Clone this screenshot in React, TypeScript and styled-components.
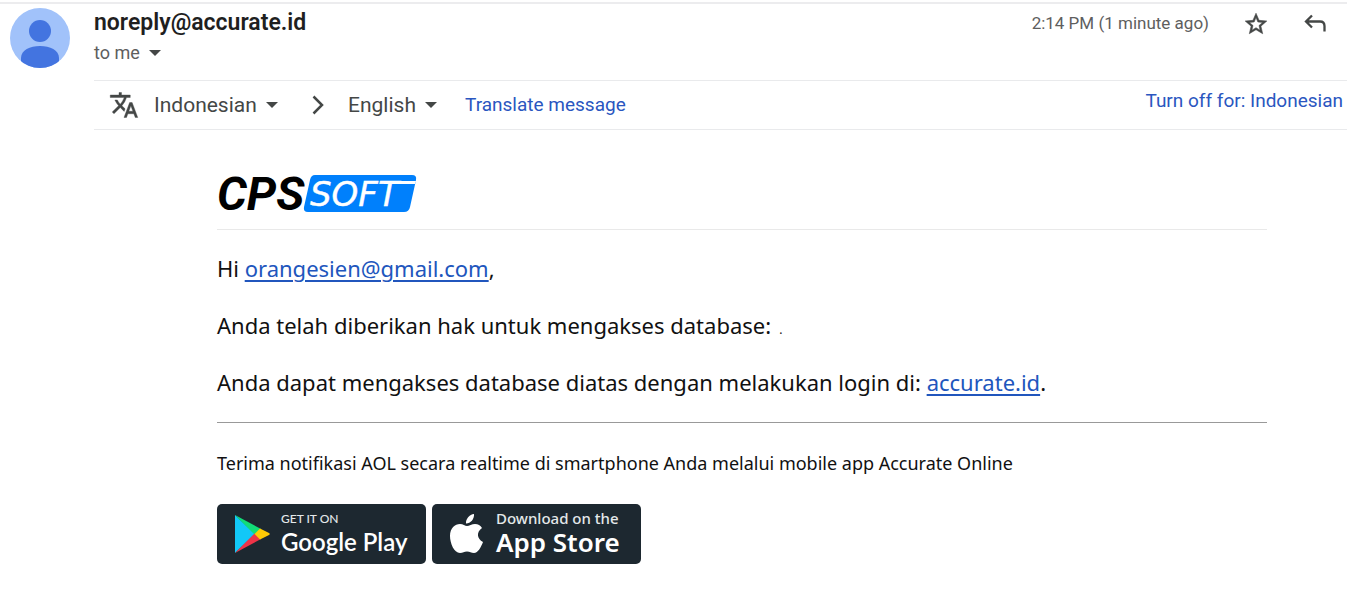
import React from "react";
import styled, { createGlobalStyle } from "styled-components";

const GlobalStyle = createGlobalStyle`
  * { box-sizing: border-box; }
  body {
    margin: 0;
    background: #fff;
    color: #1f1f1f;
    font-family: Roboto, "Liberation Sans", sans-serif;
  }
  button, select { font: inherit; color: inherit; background: none; border: 0; padding: 0; margin: 0; cursor: pointer; }
  svg { display: block; flex: none; }
  p, h2 { margin: 0; }
`;

const Message = styled.main`
  margin-top: 2px;
  border-top: 2px solid #ececee;
  padding: 4px 0 24px 10px;
  display: grid;
  grid-template-columns: 60px minmax(0, 1fr);
  column-gap: 24px;
`;

const Content = styled.div`
  min-width: 0;
`;

const Header = styled.header`
  display: flex;
  justify-content: space-between;
  align-items: flex-start;
  height: 72px;
  padding-right: 20px;
`;

const Sender = styled.h2`
  font-size: 23px;
  line-height: 30px;
  font-weight: 600;
`;

const Recipient = styled.button`
  display: flex;
  align-items: center;
  gap: 9px;
  font-size: 18px;
  line-height: 30px;
  color: #5e5e5e;
`;

const Meta = styled.div`
  display: flex;
  align-items: center;
  height: 32px;
`;

const SentAt = styled.time`
  color: #5e5e5e;
  font-size: 17px;
  padding-bottom: 2px;
`;

const IconButton = styled.button`
  display: flex;
  color: #444746;
  margin-left: 34px;
`;

const TranslateBar = styled.section`
  display: flex;
  align-items: center;
  height: 50px;
  border-top: 1px solid #e9eaec;
  border-bottom: 1px solid #e9eaec;
  padding: 0 4px 0 15px;
  color: #444746;
  font-size: 21px;
`;

const SelectWrap = styled.label`
  display: flex;
  align-items: center;
  gap: 9px;
`;

const Select = styled.select`
  appearance: none;
  line-height: 28px;
`;

const BarLink = styled.a<{ $end?: boolean }>`
  color: #2a56c0;
  font-size: 19px;
  line-height: 28px;
  text-decoration: none;
  margin-left: ${(p) => (p.$end ? "auto" : "28px")};
  padding-bottom: ${(p) => (p.$end ? "8px" : "0")};
`;

const TranslateIcon = styled.span`
  margin-right: 15px;
`;

const Arrow = styled.span`
  margin: 0 24px 0 34px;
`;

const Body = styled.article`
  margin: 40px 80px 0 123px;
  color: #111;
  font-family: "Noto Sans", "Open Sans", sans-serif;
`;

const LogoRow = styled.div`
  height: 60px;
  border-bottom: 1px solid #e9e9e9;
`;

const Paragraph = styled.p`
  font-size: 22px;
  line-height: 28px;
  margin-top: 29px;
  &:first-of-type { margin-top: 24px; }
  a { color: #2156bd; text-decoration-thickness: 2px; text-underline-offset: 3px; }
`;

const DatabaseName = styled.span`
  font-size: 12px;
  line-height: 12px;
  margin-left: 8px;
`;

const Rule = styled.hr`
  border: 0;
  border-top: 1px solid #999;
  margin: 26px 0 0;
`;

const Notice = styled.p`
  font-size: 18px;
  line-height: 26px;
  margin-top: 27px;
`;

const Stores = styled.nav`
  display: flex;
  flex-wrap: wrap;
  gap: 6px;
  margin-top: 28px;
`;

const Badge = styled.a`
  display: flex;
  align-items: center;
  width: 209px;
  height: 60px;
  padding-left: 17px;
  gap: 11px;
  border-radius: 5px;
  background: #1d2830;
  color: #fff;
  text-decoration: none;
`;

const BadgeText = styled.span<{ $font: string }>`
  display: flex;
  flex-direction: column;
  font-family: ${(p) => p.$font}, sans-serif;
  white-space: nowrap;
`;

const BadgeSmall = styled.span<{ $size: number }>`
  font-size: ${(p) => p.$size}px;
  line-height: 15px;
  font-weight: 500;
  color: #e4e8ea;
`;

const BadgeName = styled.span<{ $size: number }>`
  font-size: ${(p) => p.$size}px;
  line-height: 32px;
  font-weight: 600;
`;

const Caret = () => (
  <svg width="12" height="6" viewBox="0 0 12 6" aria-hidden="true">
    <path d="M0 0h12L6 6z" fill="#444746" />
  </svg>
);

const Avatar = () => (
  <svg width="60" height="60" viewBox="0 0 60 60" role="img" aria-label="Sender">
    <defs>
      <clipPath id="face"><circle cx="30" cy="30" r="30" /></clipPath>
    </defs>
    <g clipPath="url(#face)">
      <rect width="60" height="60" fill="#a1c2fa" />
      <circle cx="30" cy="23" r="11" fill="#4374e0" />
      <path d="M11 60V50C11 42 20 38 30 38S49 42 49 50V60z" fill="#4374e0" />
    </g>
  </svg>
);

const Logo = () => (
  <svg width="200" height="44" viewBox="0 0 200 44" overflow="visible" role="img" aria-label="CPSSOFT">
    <text x="0" y="40" fontFamily="Roboto" fontWeight="700" fontStyle="italic" fontSize="47" fill="#000">CPS</text>
    <path d="M98 5H195Q200 5 199 10L193 37Q192 42 187 42H91Q86 42 87 37L93 10Q94 5 98 5z" fill="#0080fc" />
    <text x="93" y="36" fontFamily="DejaVu Sans" fontStyle="italic" fontSize="34" fill="#fff" stroke="#fff" strokeWidth="0.400">SOFT</text>
    <path d="M168 11H199L198 14H167z" fill="#fff" />
  </svg>
);

export default function App() {
  return (
    <>
      <GlobalStyle />
      <Message>
        <Avatar />
        <Content>
          <Header>
            <div>
              <Sender>noreply@accurate.id</Sender>
              <Recipient>to me <Caret /></Recipient>
            </div>
            <Meta>
              <SentAt>2:14 PM (1 minute ago)</SentAt>
              <IconButton aria-label="Star">
                <svg width="26" height="26" viewBox="0 0 24 24" fill="currentColor" stroke="currentColor" strokeWidth="0.500">
                  <path d="M22 9.240l-7.190-.620L12 2 9.190 8.630 2 9.240l5.460 4.730L5.820 21 12 17.270 18.180 21l-1.630-7.030L22 9.240zM12 15.400l-3.760 2.270 1-4.280-3.320-2.880 4.380-.380L12 6.100l1.710 4.040 4.380.380-3.320 2.880 1 4.280L12 15.400z" />
                </svg>
              </IconButton>
              <IconButton aria-label="Reply">
                <svg width="24" height="24" viewBox="0 0 24 24" fill="none" stroke="currentColor" strokeWidth="2.300">
                  <path d="M9 3.500L3 9.500l6 6M3 9.500h14q4.500 0 4.500 4.500v5.500" />
                </svg>
              </IconButton>
            </Meta>
          </Header>
          <TranslateBar aria-label="Translation">
            <TranslateIcon>
              <svg width="30" height="30" viewBox="0 0 24 24" fill="#444746" stroke="#444746" strokeWidth="0.300" aria-hidden="true">
                <path d="M12.870 15.070l-2.540-2.510.030-.030A17.520 17.520 0 0 0 14.070 6H17V4h-7V2H8v2H1v2h11.170C11.500 7.920 10.440 9.750 9 11.350 8.070 10.320 7.300 9.190 6.690 8h-2c.730 1.630 1.730 3.170 2.980 4.560l-5.090 5.020L4 19l5-5 3.110 3.110.760-2.040zM18.500 10h-2L12 22h2l1.120-3h4.750L21 22h2l-4.500-12zm-2.620 7l1.620-4.330L19.120 17h-3.240z" />
              </svg>
            </TranslateIcon>
            <SelectWrap>
              <Select aria-label="Source language"><option>Indonesian</option></Select>
              <Caret />
            </SelectWrap>
            <Arrow>
              <svg width="12" height="20" viewBox="0 0 12 20" fill="none" stroke="#444746" strokeWidth="2.500" aria-hidden="true">
                <path d="M1.500 1.500L10 10l-8.500 8.500" />
              </svg>
            </Arrow>
            <SelectWrap>
              <Select aria-label="Target language"><option>English</option></Select>
              <Caret />
            </SelectWrap>
            <BarLink href="#translate">Translate message</BarLink>
            <BarLink href="#turn-off" $end>Turn off for: Indonesian</BarLink>
          </TranslateBar>
          <Body>
            <LogoRow><Logo /></LogoRow>
            <Paragraph>Hi <a href="mailto:orangesien@gmail.com">orangesien@gmail.com</a>,</Paragraph>
            <Paragraph>Anda telah diberikan hak untuk mengakses database:<DatabaseName>.</DatabaseName></Paragraph>
            <Paragraph>Anda dapat mengakses database diatas dengan melakukan login di: <a href="#accurate">accurate.id</a>.</Paragraph>
            <Rule />
            <Notice>Terima notifikasi AOL secara realtime di smartphone Anda melalui mobile app Accurate Online</Notice>
            <Stores aria-label="Mobile apps">
              <Badge href="#google-play">
                <svg width="36" height="40" viewBox="0 0 36 40" aria-hidden="true">
                  <path d="M1 1L21 20 1 39z" fill="#12c8f7" />
                  <path d="M1 1L27 15 20.500 20.500z" fill="#12dc78" />
                  <path d="M1 39L27 25 20.500 19.500z" fill="#ee3448" />
                  <path d="M26 14.500L35 19Q36.500 20 35 21L26 25.500 20.500 20z" fill="#ffca05" />
                </svg>
                <BadgeText $font="Lato">
                  <BadgeSmall $size={12}>GET IT ON</BadgeSmall>
                  <BadgeName $size={24}>Google Play</BadgeName>
                </BadgeText>
              </Badge>
              <Badge href="#app-store">
                <svg width="36" height="42" viewBox="0 0 36 42" fill="#fff" aria-hidden="true">
                  <path d="M25 1c.500 5-3.500 9.500-8 9.500C16.500 6 20.500 1.500 25 1z" />
                  <path d="M33 15c-6 4-5 11 1 14-2 5-5 11-9 11-3 0-4-1.500-7-1.500S14 40 11 40C5 40 1 30 1 23c0-8 5-12 10-12 3 0 5 2 7 2s5-2 8-2 5.500 1.500 7 4z" />
                </svg>
                <BadgeText $font={'"Noto Sans"'}>
                  <BadgeSmall $size={15}>Download on the</BadgeSmall>
                  <BadgeName $size={26}>App Store</BadgeName>
                </BadgeText>
              </Badge>
            </Stores>
          </Body>
        </Content>
      </Message>
    </>
  );
}
